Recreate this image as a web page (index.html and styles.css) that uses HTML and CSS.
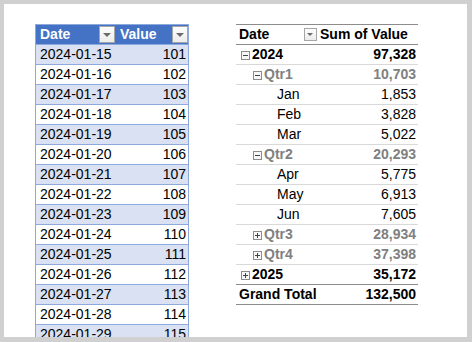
FILE: index.html
```html
<!DOCTYPE html>
<html lang="en">
<head>
    <meta charset="UTF-8">
    <title>Table and PivotTable</title>
    <link rel="stylesheet" href="styles.css">
</head>
<body>
    <div class="sheet">
        <!-- Source table -->
        <table class="data">
            <thead>
                <tr>
                    <th class="col-date">Date<span class="filter"></span></th>
                    <th class="col-value">Value<span class="filter"></span></th>
                </tr>
            </thead>
            <tbody>
                <tr><td>2024-01-15</td><td class="num">101</td></tr>
                <tr><td>2024-01-16</td><td class="num">102</td></tr>
                <tr><td>2024-01-17</td><td class="num">103</td></tr>
                <tr><td>2024-01-18</td><td class="num">104</td></tr>
                <tr><td>2024-01-19</td><td class="num">105</td></tr>
                <tr><td>2024-01-20</td><td class="num">106</td></tr>
                <tr><td>2024-01-21</td><td class="num">107</td></tr>
                <tr><td>2024-01-22</td><td class="num">108</td></tr>
                <tr><td>2024-01-23</td><td class="num">109</td></tr>
                <tr><td>2024-01-24</td><td class="num">110</td></tr>
                <tr><td>2024-01-25</td><td class="num">111</td></tr>
                <tr><td>2024-01-26</td><td class="num">112</td></tr>
                <tr><td>2024-01-27</td><td class="num">113</td></tr>
                <tr><td>2024-01-28</td><td class="num">114</td></tr>
                <tr><td>2024-01-29</td><td class="num">115</td></tr>
                <tr><td>2024-01-30</td><td class="num">116</td></tr>
            </tbody>
        </table>

        <!-- Pivot table -->
        <table class="pivot">
            <thead>
                <tr>
                    <th class="p-label">Date<span class="filter"></span></th>
                    <th class="p-sum">Sum of Value</th>
                </tr>
            </thead>
            <tbody>
                <tr class="year">
                    <td><svg class="tog" width="9" height="9" viewBox="0 0 9 9"><rect x=".5" y=".5" width="8" height="8" fill="#f7f7f7" stroke="#8c8c8c"/><path d="M2 4.5h5" stroke="#444"/></svg>2024</td>
                    <td class="num">97,328</td>
                </tr>
                <tr class="qtr">
                    <td><svg class="tog" width="9" height="9" viewBox="0 0 9 9"><rect x=".5" y=".5" width="8" height="8" fill="#f7f7f7" stroke="#8c8c8c"/><path d="M2 4.5h5" stroke="#444"/></svg>Qtr1</td>
                    <td class="num">10,703</td>
                </tr>
                <tr class="month"><td>Jan</td><td class="num">1,853</td></tr>
                <tr class="month"><td>Feb</td><td class="num">3,828</td></tr>
                <tr class="month"><td>Mar</td><td class="num">5,022</td></tr>
                <tr class="qtr">
                    <td><svg class="tog" width="9" height="9" viewBox="0 0 9 9"><rect x=".5" y=".5" width="8" height="8" fill="#f7f7f7" stroke="#8c8c8c"/><path d="M2 4.5h5" stroke="#444"/></svg>Qtr2</td>
                    <td class="num">20,293</td>
                </tr>
                <tr class="month"><td>Apr</td><td class="num">5,775</td></tr>
                <tr class="month"><td>May</td><td class="num">6,913</td></tr>
                <tr class="month"><td>Jun</td><td class="num">7,605</td></tr>
                <tr class="qtr">
                    <td><svg class="tog" width="9" height="9" viewBox="0 0 9 9"><rect x=".5" y=".5" width="8" height="8" fill="#f7f7f7" stroke="#8c8c8c"/><path d="M2 4.5h5M4.5 2v5" stroke="#444"/></svg>Qtr3</td>
                    <td class="num">28,934</td>
                </tr>
                <tr class="qtr">
                    <td><svg class="tog" width="9" height="9" viewBox="0 0 9 9"><rect x=".5" y=".5" width="8" height="8" fill="#f7f7f7" stroke="#8c8c8c"/><path d="M2 4.5h5M4.5 2v5" stroke="#444"/></svg>Qtr4</td>
                    <td class="num">37,398</td>
                </tr>
                <tr class="year">
                    <td><svg class="tog" width="9" height="9" viewBox="0 0 9 9"><rect x=".5" y=".5" width="8" height="8" fill="#f7f7f7" stroke="#8c8c8c"/><path d="M2 4.5h5M4.5 2v5" stroke="#444"/></svg>2025</td>
                    <td class="num">35,172</td>
                </tr>
                <tr class="total"><td>Grand Total</td><td class="num">132,500</td></tr>
            </tbody>
        </table>
    </div>
</body>
</html>
```

FILE: styles.css
```css
body {
    margin: 0;
    background-color: #d0d0d0;
    font-family: "Liberation Sans", Arial, sans-serif;
}
.sheet {
    width: 463px;
    height: 333px;
    margin: 4px 0 0 4px;
    background-color: #fff;
    overflow: hidden;
    display: flex;
    align-items: flex-start;
    gap: 47px;
    padding: 20px 0 0 31px;
    box-sizing: border-box;
}
table {
    border-collapse: collapse;
    font-size: 14px;
    color: #000;
}
th, td {
    height: 19px;
    padding: 0;
    line-height: 19px;
    white-space: nowrap;
}

/* source table */
.data {
    width: 154px;
    table-layout: fixed;
    border: 1px solid #8ea9db;
}
.data th {
    background-color: #4472c4;
    color: #fff;
    text-align: left;
    padding-left: 4px;
    border-bottom: 1px solid #8ea9db;
}
.data .col-date {
    width: 76px;
}
.data td {
    padding: 0 2px 0 4px;
    border-bottom: 1px solid #8ea9db;
}
.data tbody tr:nth-child(odd) td {
    background-color: #d9e1f2;
}
.num {
    text-align: right;
}
.filter {
    float: right;
    width: 14px;
    height: 15px;
    margin: 1px 1px 0 0;
    border: 1px solid #a6a6a6;
    background: linear-gradient(#fdfdfd, #ececec);
    position: relative;
}
.filter::after {
    content: "";
    position: absolute;
    left: 3px;
    top: 6px;
    border-left: 4px solid transparent;
    border-right: 4px solid transparent;
    border-top: 4px solid #6b6b6b;
}
.col-value .filter {
    margin-right: 0;
}

/* pivot table */
.pivot {
    width: 182px;
    table-layout: fixed;
    border-top: 1px solid #8c8c8c;
}
.pivot th {
    text-align: left;
    padding-left: 3px;
    border-bottom: 1px solid #8c8c8c;
}
.pivot .p-label {
    width: 79px;
}
.pivot .p-label .filter {
    margin-right: 1px;
    width: 11px;
    height: 11px;
    margin-top: 3px;
}
.pivot .p-label .filter::after {
    left: 2px;
    top: 4px;
    border-left-width: 3px;
    border-right-width: 3px;
    border-top-width: 3px;
}
.pivot .p-sum {
    padding-left: 2px;
}
.pivot td {
    border-bottom: 1px solid #d9d9d9;
    padding-right: 2px;
}
.tog {
    vertical-align: -1px;
    margin-right: 2px;
}
.pivot .year td {
    font-weight: bold;
}
.pivot .year td:first-child {
    padding-left: 5px;
}
.pivot .qtr td {
    font-weight: bold;
    color: #808080;
}
.pivot .qtr td:first-child {
    padding-left: 17px;
}
.pivot .month td:first-child {
    padding-left: 41px;
}
.pivot tr.year:nth-last-child(2) td {
    border-bottom: 1px solid #8c8c8c;
}
.pivot .total td {
    font-weight: bold;
    padding-left: 3px;
    border-bottom: 1px solid #8c8c8c;
}
.pivot .total td.num {
    padding-left: 0;
}
```
